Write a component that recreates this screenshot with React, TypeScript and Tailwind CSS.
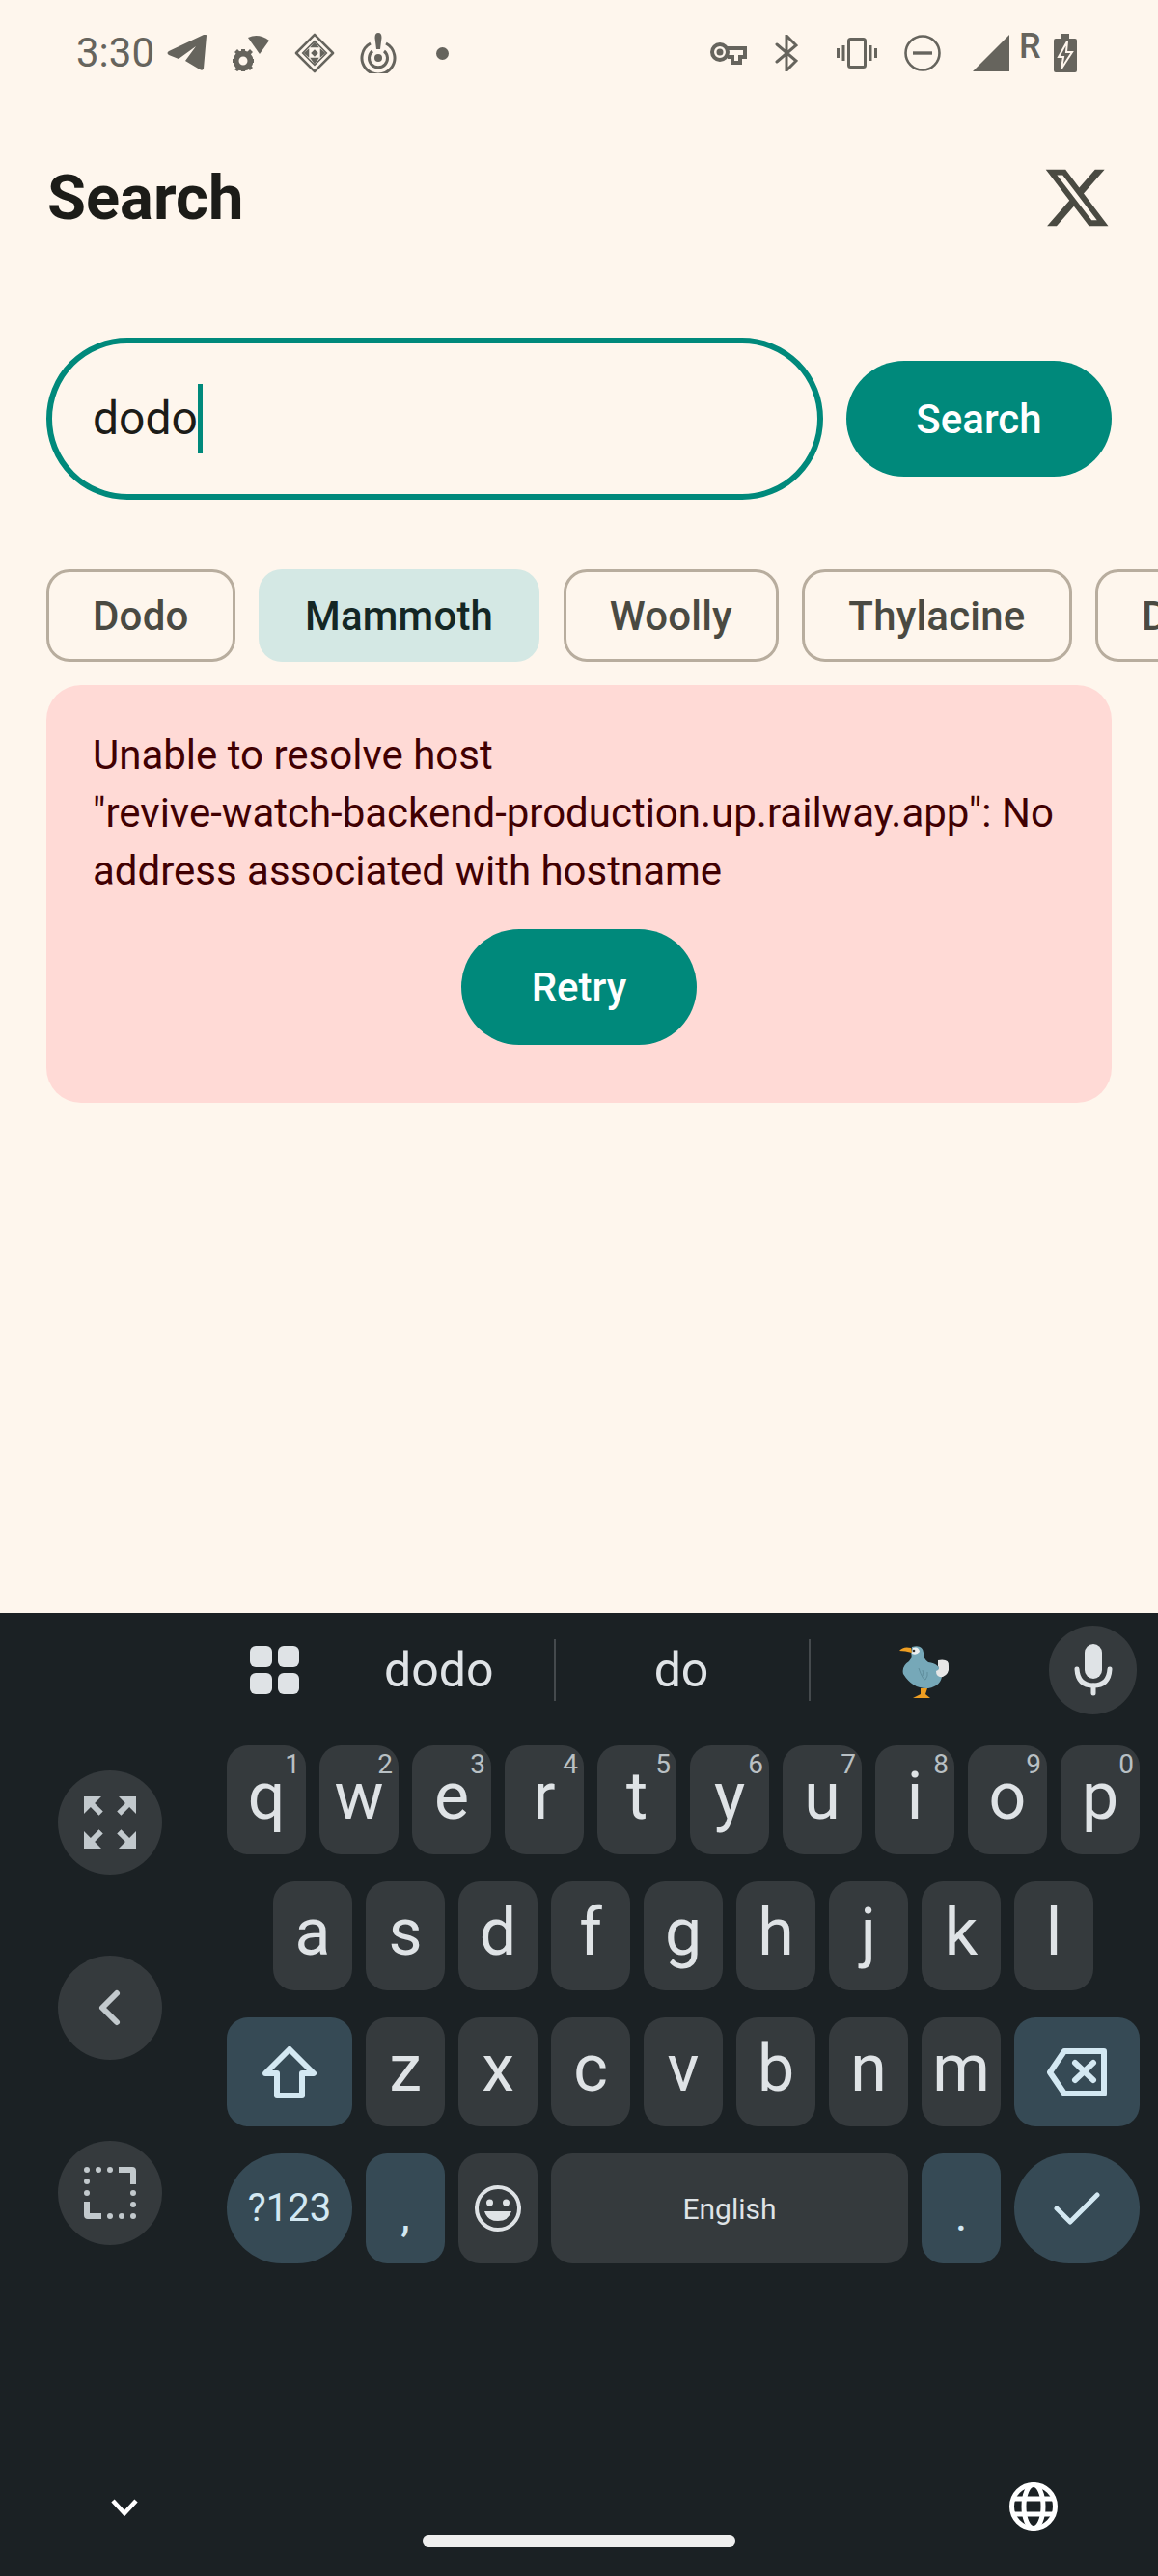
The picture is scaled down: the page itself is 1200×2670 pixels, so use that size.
import React from 'react';

const ROW_ONE = [['q', '1'], ['w', '2'], ['e', '3'], ['r', '4'], ['t', '5'], ['y', '6'], ['u', '7'], ['i', '8'], ['o', '9'], ['p', '0']];
const ROW_TWO = ['a', 's', 'd', 'f', 'g', 'h', 'j', 'k', 'l'];
const ROW_THREE = ['z', 'x', 'c', 'v', 'b', 'n', 'm'];
const CHIPS = ['Dodo', 'Mammoth', 'Woolly', 'Thylacine', 'Dire wolf'];

const StatusIcons = () => (
  <div className="flex h-[108px] items-center pl-[79px] pt-[2px] text-[#66645d]">
    <span className="w-[86px] text-[42px] leading-none">3:30</span>
    {/* telegram */}
    <svg width="42" height="38" viewBox="0 0 42 38" className="ml-[8px]" fill="currentColor">
      <path d="M41 1 L38 35 Q37 38 34 36 L19 27 L30 12 L12 25 L2 21 Q-1 19 2 17 L38 0 Q41 -1 41 1Z" />
    </svg>
    <svg width="38" height="38" viewBox="0 0 38 38" className="ml-[26px]" fill="currentColor">
      <path d="M16 3 Q27 -2 38 6 L28 20Z" />
      <circle cx="11" cy="27" r="7.5" fill="none" stroke="currentColor" strokeWidth="6" />
      <path d="M9 15h4v4h-4zM9 35h4v3h-4zM0 25h3v4H0zM19 25h3v4h-3zM2 18l3-3 3 3-3 3zM15 18l3-3 3 3-3 3zM2 36l3-3 3 3-3 2zM15 34l3-3 3 3-3 3z" />
    </svg>
    <svg width="42" height="44" viewBox="0 0 44 44" className="ml-[26px]" fill="none" stroke="currentColor">
      <path d="M22 2 L42 22 L22 42 L2 22Z" strokeWidth="2.6" strokeLinejoin="round" />
      <path d="M22 9 L35 22 L22 35 L9 22Z" strokeWidth="1.6" />
      <path d="M22 10 L27 16 H17Z M22 34 L27 27 H17Z M10 22 L16 17 V27Z M34 22 L28 17 V27Z M18 22 L22 18 L26 22 L22 26Z" fill="currentColor" stroke="none" />
    </svg>
    <svg width="38" height="42" viewBox="0 0 38 42" className="ml-[26px]" fill="none" stroke="currentColor">
      <path d="M11 11 A17 17 0 1 0 27 11" strokeWidth="3" />
      <path d="M13 19 A9.5 9.5 0 1 0 25 19" strokeWidth="3" />
      <circle cx="19" cy="26" r="4" fill="currentColor" stroke="none" />
      <path d="M15.5 5 Q15.5 0 19 0 Q22.5 0 22.5 5 L21 17 H17Z" fill="currentColor" stroke="none" />
    </svg>
    <span className="ml-[41px] h-[13px] w-[13px] rounded-full bg-current" />
    <svg width="38" height="24" viewBox="0 0 38 24" className="ml-[271px]" fill="none" stroke="currentColor" strokeWidth="4">
      <circle cx="10" cy="11" r="8" />
      <circle cx="10" cy="11" r="1.5" fill="currentColor" />
      <path d="M17 7 H36 V16 H31 V22 H23 V16 H18" />
    </svg>
    <svg width="24" height="38" viewBox="0 0 24 38" className="ml-[29px]" fill="none" stroke="currentColor" strokeWidth="3" strokeLinecap="round">
      <path d="M2 10 L22 27 L12 37 V1 L22 11 L2 28" />
    </svg>
    <svg width="42" height="32" viewBox="0 0 42 32" className="ml-[40px]" fill="none" stroke="currentColor">
      <rect x="12.5" y="1.5" width="17" height="29" rx="2" strokeWidth="3" />
      <path d="M7 8 V24 M1.5 11 V21 M35 8 V24 M40.5 11 V21" strokeWidth="3" />
    </svg>
    <svg width="38" height="38" viewBox="0 0 38 38" className="ml-[28px]" fill="none" stroke="currentColor">
      <circle cx="19" cy="19" r="17.5" strokeWidth="2.6" />
      <path d="M9 19 H29" strokeWidth="3.4" />
    </svg>
    <svg width="38" height="38" viewBox="0 0 38 38" className="ml-[33px]" fill="currentColor">
      <path d="M38 0 V38 H0Z" />
    </svg>
    <span className="mb-[14px] ml-[10px] w-[21px] text-[36px] font-medium leading-none">R</span>
    <svg width="24" height="40" viewBox="0 0 24 40" className="ml-[15px]" fill="currentColor">
      <path d="M8 0 H16 V5 H22 Q24 5 24 7 V38 Q24 40 22 40 H2 Q0 40 0 38 V7 Q0 5 2 5 H8Z" />
      <path d="M14 8 L5 24 H10 L8 36 L19 19 H13Z" stroke="#fef6ed" strokeWidth="2" />
    </svg>
  </div>
);

const Key = ({ label, hint }: { label: string; hint?: string }) => (
  <div className="relative flex h-full w-[82px] items-center justify-center rounded-[22px] bg-[#353a3d] pb-[8px] text-[68px] leading-none text-[#dfe3e6]">
    {label}
    {hint && <span className="absolute right-[6px] top-[6px] text-[28px] leading-none text-[#b9c0c4]">{hint}</span>}
  </div>
);

const SideButton = ({ children }: { children: React.ReactNode }) => (
  <div className="flex h-[108px] w-[108px] items-center justify-center rounded-full bg-[#353a3d] text-[#c2c9cd]">
    {children}
  </div>
);

const DodoEmoji = () => (
  <svg width="52" height="56" viewBox="0 0 52 56">
    <path d="M13 2 Q24 -1 25 8 Q25 15 30 18 Q42 19 44 31 Q44 42 30 45 Q14 46 4 30 Q2 22 10 17 Q14 13 12 8Z" fill="#76a8b8" />
    <path d="M14 3 Q20 1 21 7 Q18 11 13 9Z" fill="#eceff0" />
    <circle cx="15" cy="6" r="1.3" fill="#333" />
    <path d="M0 6 Q4 1 12 3 L13 8 Q6 6 0 6Z" fill="#ee9e22" />
    <path d="M40 16 Q52 14 51 22 Q52 30 45 33 Q38 34 38 27 Q43 25 40 22Z" fill="#e6e6e6" />
    <path d="M20 24 Q24 36 27 36 M27 36 Q30 32 29 28 M24 32 Q25 28 24 26" fill="none" stroke="#5f8d9c" strokeWidth="1" />
    <path d="M22 45 H29 L27 51 L32 55 H14 L22 51Z" fill="#ee9e22" />
  </svg>
);

const Keyboard = () => (
  <div className="relative flex h-[998px] flex-col bg-[#1b2124]">
    <div className="mb-[19px] flex h-[118px] items-center">
      <div className="ml-[259px] grid h-[50px] w-[51px] grid-cols-2 gap-[6px]">
        <span className="rounded-[6px] bg-[#dfe3e6]" />
        <span className="rounded-[6px] bg-[#dfe3e6]" />
        <span className="rounded-[6px] bg-[#dfe3e6]" />
        <span className="rounded-[6px] bg-[#dfe3e6]" />
      </div>
      <span className="ml-[88px] w-[176px] text-[50px] leading-none text-[#dfe3e6]">dodo</span>
      <span className="h-[64px] w-[2px] bg-[#454a4d]" />
      <span className="w-[262px] pr-[2px] text-center text-[50px] leading-none text-[#dfe3e6]">do</span>
      <span className="h-[64px] w-[2px] bg-[#454a4d]" />
      <div className="ml-[92px] mt-[4px]"><DodoEmoji /></div>
      <div className="ml-[103px] flex h-[92px] w-[91px] items-center justify-center rounded-full bg-[#353a3d]">
        <svg width="40" height="54" viewBox="0 0 40 54" fill="none">
          <rect x="11" y="0" width="18" height="36" rx="9" fill="#dfe3e6" />
          <path d="M3 26 Q4 43 20 43 Q36 43 37 26" stroke="#dfe3e6" strokeWidth="5" strokeLinecap="round" />
          <path d="M20 43 V51" stroke="#dfe3e6" strokeWidth="5" strokeLinecap="round" />
        </svg>
      </div>
    </div>
    <div className="flex">
      <div className="ml-[60px] mt-[26px] flex w-[108px] flex-col gap-[84px]">
        <SideButton>
          <svg width="72" height="72" viewBox="0 0 24 24" fill="currentColor">
            <path d="M15 3l2.3 2.3-2.89 2.87 1.42 1.42L18.7 6.7 21 9V3zM3 9l2.3-2.3 2.87 2.89 1.42-1.42L6.7 5.3 9 3H3zm6 12l-2.3-2.3 2.89-2.87-1.42-1.42L5.3 17.3 3 15v6zm12-6l-2.3 2.3-2.87-2.89-1.42 1.42 2.89 2.87L15 21h6z" />
          </svg>
        </SideButton>
        <SideButton>
          <svg width="28" height="40" viewBox="0 0 28 40" fill="none" stroke="currentColor" strokeWidth="6" strokeLinecap="round" strokeLinejoin="round">
            <path d="M21 5 L6 20 L21 35" />
          </svg>
        </SideButton>
        <SideButton>
          <svg width="54" height="54" viewBox="0 0 54 54" fill="currentColor">
            <path d="M36 0 H50 Q54 0 54 4 V18 H48 V6 H36Z" />
            <path d="M0 36 H6 V48 H18 V54 H4 Q0 54 0 50Z" />
            <circle cx="3" cy="3" r="3" /><circle cx="15" cy="3" r="3" /><circle cx="27" cy="3" r="3" />
            <circle cx="3" cy="15" r="3" /><circle cx="3" cy="27" r="3" />
            <circle cx="51" cy="27" r="3" /><circle cx="51" cy="39" r="3" /><circle cx="51" cy="51" r="3" />
            <circle cx="27" cy="51" r="3" /><circle cx="39" cy="51" r="3" />
          </svg>
        </SideButton>
      </div>
      <div className="ml-[67px] flex flex-col gap-[28px]">
        <div className="flex h-[113px] gap-[14px]">
          {ROW_ONE.map(([l, h]) => <Key key={l} label={l} hint={h} />)}
        </div>
        <div className="flex h-[113px] gap-[14px] pl-[48px]">
          {ROW_TWO.map((l) => <Key key={l} label={l} />)}
        </div>
        <div className="flex h-[113px] gap-[14px]">
          <div className="flex w-[130px] items-center justify-center rounded-[22px] bg-[#364a55]">
            <svg width="56" height="54" viewBox="0 0 56 54" fill="none" stroke="#d3e8f2" strokeWidth="6" strokeLinejoin="round">
              <path d="M28 3 L53 28 H41 V51 H15 V28 H3Z" />
            </svg>
          </div>
          {ROW_THREE.map((l) => <Key key={l} label={l} />)}
          <div className="flex w-[130px] items-center justify-center rounded-[22px] bg-[#364a55]">
            <svg width="62" height="50" viewBox="0 0 62 50" fill="none" stroke="#d3e8f2" strokeWidth="6" strokeLinejoin="round" strokeLinecap="round">
              <path d="M59 3 H18 L3 25 L18 47 H59Z" />
              <path d="M29 15 L48 33 M48 15 L29 33" />
            </svg>
          </div>
        </div>
        <div className="flex h-[114px] gap-[14px]">
          <div className="flex w-[130px] items-center justify-center rounded-[57px] bg-[#364a55] text-[40px] text-[#d3e8f2]">?123</div>
          <div className="flex w-[82px] items-center justify-center rounded-[22px] bg-[#364a55] pt-[14px] text-[48px] leading-none text-[#d3e8f2]">,</div>
          <div className="flex w-[82px] items-center justify-center rounded-[22px] bg-[#353a3d]">
            <svg width="48" height="48" viewBox="0 0 48 48" fill="none">
              <circle cx="24" cy="24" r="22" stroke="#dfe3e6" strokeWidth="4" />
              <circle cx="15.5" cy="18" r="3.5" fill="#dfe3e6" />
              <circle cx="32.5" cy="18" r="3.5" fill="#dfe3e6" />
              <path d="M10 27 H38 Q35 37 24 37 Q13 37 10 27Z" fill="#dfe3e6" />
            </svg>
          </div>
          <div className="flex w-[370px] items-center justify-center rounded-[22px] bg-[#353a3d] text-[30px] text-[#dfe3e6]">English</div>
          <div className="flex w-[82px] items-center justify-center rounded-[22px] bg-[#364a55] pt-[14px] text-[48px] leading-none text-[#d3e8f2]">.</div>
          <div className="flex w-[130px] items-center justify-center rounded-[57px] bg-[#364a55]">
            <svg width="48" height="34" viewBox="0 0 48 34" fill="none" stroke="#d3e8f2" strokeWidth="5" strokeLinecap="round" strokeLinejoin="round">
              <path d="M3 17 L17 31 L45 3" />
            </svg>
          </div>
        </div>
      </div>
    </div>
    <div className="mt-[227px] flex items-start justify-between pl-[115px] pr-[104px]">
      <svg width="28" height="18" viewBox="0 0 28 18" fill="none" stroke="#ffffff" strokeWidth="4.5" className="mt-[17px]">
        <path d="M2 2 L14 15 L26 2" />
      </svg>
      <svg width="50" height="50" viewBox="0 0 50 50" fill="none" stroke="#ffffff" strokeWidth="5">
        <circle cx="25" cy="25" r="22.5" />
        <ellipse cx="25" cy="25" rx="10" ry="22.5" />
        <path d="M3 17 H47 M3 33 H47" />
      </svg>
    </div>
    {/* gesture pill */}
    <span className="absolute bottom-[30px] left-[438px] h-[12px] w-[324px] rounded-full bg-[#eeeeee]" />
  </div>
);

export default function App() {
  return (
    <div className="flex h-[2670px] w-[1200px] flex-col overflow-hidden bg-[#fef6ed] font-['Roboto',sans-serif]">
      <StatusIcons />
      <div className="h-[1564px]">
        <div className="mt-[36px] flex h-[122px] items-center justify-between px-[48px]">
          <h1 className="pl-[1px] text-[65px] font-bold leading-none text-[#1c1c18]">Search</h1>
          <svg width="72" height="72" viewBox="0 0 24 24" fill="#4a4a42">
            <path d="M18.244 2.25h3.308l-7.227 8.26 8.502 11.24H16.17l-5.214-6.817L4.99 21.75H1.68l7.73-8.835L1.254 2.25H8.08l4.713 6.231zm-1.161 17.52h1.833L7.084 4.126H5.117z" />
          </svg>
        </div>
        <div className="mt-[84px] flex items-center gap-[24px] pl-[48px] pr-[48px]">
          <div className="flex h-[168px] w-[805px] items-center rounded-full border-[6px] border-[#00897b] pl-[42px]">
            <span className="text-[48px] leading-none text-[#1c1c18]">dodo</span>
            <span className="h-[72px] w-[5px] bg-[#00897b]" />
          </div>
          <button className="h-[120px] w-[275px] rounded-full bg-[#00897b] text-[42px] font-medium text-white">Search</button>
        </div>
        <div className="mt-[72px] flex gap-[24.5px] overflow-hidden pl-[48px]">
          {CHIPS.map((c) => (
            <div
              key={c}
              className={c === 'Mammoth'
                ? 'flex h-[96px] shrink-0 items-center rounded-[24px] bg-[#d4e8e4] px-[48px] text-[42px] font-medium tracking-[0.2px] text-[#142724]'
                : 'flex h-[96px] shrink-0 items-center rounded-[24px] border-[3px] border-[#b8ad9e] px-[45px] text-[42px] font-medium tracking-[0.2px] text-[#4a4a42]'}
            >
              {c}
            </div>
          ))}
        </div>
        <div className="mx-[48px] mt-[24px] flex h-[433px] flex-col rounded-[36px] bg-[#ffdad6] px-[48px] pt-[43px]">
          <p className="text-[42px] leading-[60px] text-[#410002]">
            Unable to resolve host <span className="whitespace-nowrap">"revive-watch-backend-production.up.railway.app":</span> No address associated with hostname
          </p>
          <button className="mx-auto mt-[30px] h-[120px] w-[244px] rounded-full bg-[#00897b] text-[42px] font-medium text-white">Retry</button>
        </div>
      </div>
      <Keyboard />
    </div>
  );
}
